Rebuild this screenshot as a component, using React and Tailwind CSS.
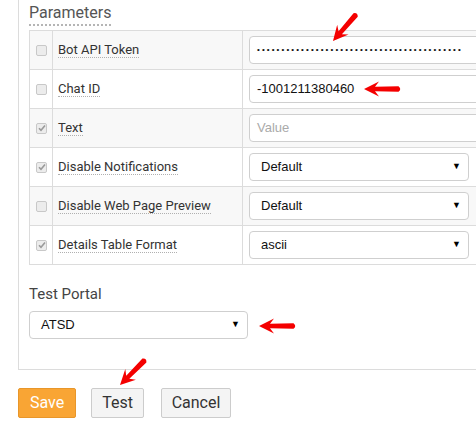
const rows = [
  { label: "Bot API Token", checked: false, kind: "password" },
  { label: "Chat ID", checked: false, kind: "text", value: "-1001211380460" },
  { label: "Text", checked: true, kind: "text", placeholder: "Value" },
  { label: "Disable Notifications", checked: true, kind: "select", value: "Default" },
  { label: "Disable Web Page Preview", checked: false, kind: "select", value: "Default" },
  { label: "Details Table Format", checked: true, kind: "select", value: "ascii" },
];

function Check({ checked }) {
  return (
    <span className="flex h-[11px] w-[11px] items-center justify-center rounded-[2px] border border-[#c8c8c8] bg-[#ececec]">
      {checked && (
        <svg width="8" height="8" viewBox="0 0 8 8">
          <path d="M1 4.2 L3 6.3 L7 1.5" fill="none" stroke="#9a9a9a" strokeWidth="1.6" />
        </svg>
      )}
    </span>
  );
}

function Select({ value, className = "" }) {
  return (
    <div
      className={`flex h-[28px] items-center justify-between rounded-[4px] border border-[#cfcfcf] bg-white pl-[11px] pr-[7px] text-[13px] text-[#111] ${className}`}
    >
      <span>{value}</span>
      <span className="text-[9px] text-black">▼</span>
    </div>
  );
}

// red annotation arrow, tip at (x, y), pointing left before rotation
function Arrow({ className }) {
  return (
    <svg
      width="38"
      height="16"
      viewBox="0 0 38 16"
      className={`absolute origin-[0_8px] ${className}`}
    >
      <path
        d="M0 8 L15 0.5 L11 5.8 L34.5 5.2 Q38 8 34.5 10.8 L11 10.2 L15 15.5 Z"
        fill="#f40000"
      />
    </svg>
  );
}

export default function App() {
  return (
    <div className="relative h-[431px] w-[476px] overflow-hidden bg-white font-['Roboto',sans-serif]">
      <div className="ml-[18px] border-b border-l border-[#dcdcdc] pb-[30px] pl-[10px] pt-[1px]">
        <h3 className="inline-block border-b-2 border-dotted border-[#b5b5b5] pb-[1px] text-[16px] leading-[20px] text-[#555]">
          Parameters
        </h3>

        <table className="mt-[4px] w-[480px] border-collapse border border-[#dcdcdc] text-[13px]">
          <tbody>
            {rows.map((r, i) => (
              <tr key={r.label} className={i % 2 === 0 ? "bg-[#f8f8f8]" : "bg-white"}>
                <td className="h-[39px] w-[23px] border border-[#dcdcdc] pl-[6px] align-middle">
                  <Check checked={r.checked} />
                </td>
                <td className="w-[190px] border border-[#dcdcdc] pl-[5px] align-middle">
                  <span className="border-b border-dotted border-[#b0b0b0] text-[#333]">{r.label}</span>
                </td>
                <td className="border border-[#dcdcdc] pl-[6px] align-middle">
                  {r.kind === "password" && (
                    <div className="flex h-[28px] items-center overflow-hidden whitespace-nowrap rounded-[4px] border border-[#cfcfcf] bg-white pl-[7px] text-[8px] tracking-[2.1px] text-[#111] font-['Liberation_Sans',sans-serif]">
                      {"•".repeat(42)}
                    </div>
                  )}
                  {r.kind === "text" && (
                    <div className="flex h-[28px] items-center rounded-[4px] border border-[#cfcfcf] bg-white pl-[7px] font-['Liberation_Sans',sans-serif]">
                      {r.value ? (
                        <span className="text-[#111]">{r.value}</span>
                      ) : (
                        <span className="text-[#aaa]">{r.placeholder}</span>
                      )}
                    </div>
                  )}
                  {r.kind === "select" && (
                    <Select value={r.value} className="w-[220px] font-['Liberation_Sans',sans-serif]" />
                  )}
                </td>
              </tr>
            ))}
          </tbody>
        </table>

        <div className="mt-[20px] text-[15px] leading-[18px] text-[#444]">Test Portal</div>
        <Select value="ATSD" className="mt-[8px] w-[219px] font-['Liberation_Sans',sans-serif]" />
      </div>

      <div className="ml-[18px] mt-[18px] flex gap-[15px] text-[16px]">
        <button className="h-[30px] w-[58px] rounded-[2px] border border-[#e8962a] bg-[#f9a534] text-white">
          Save
        </button>
        <button className="h-[30px] w-[53px] rounded-[2px] border border-[#cccccc] bg-[#f4f4f4] text-[#333]">
          Test
        </button>
        <button className="ml-[2px] h-[30px] w-[70px] rounded-[2px] border border-[#cccccc] bg-[#f4f4f4] text-[#333]">
          Cancel
        </button>
      </div>

      <Arrow className="left-[333px] top-[33px] -rotate-[49deg]" />
      <Arrow className="left-[364px] top-[81px]" />
      <Arrow className="left-[259px] top-[318px]" />
      <Arrow className="left-[120px] top-[377px] -rotate-45" />
    </div>
  );
}
